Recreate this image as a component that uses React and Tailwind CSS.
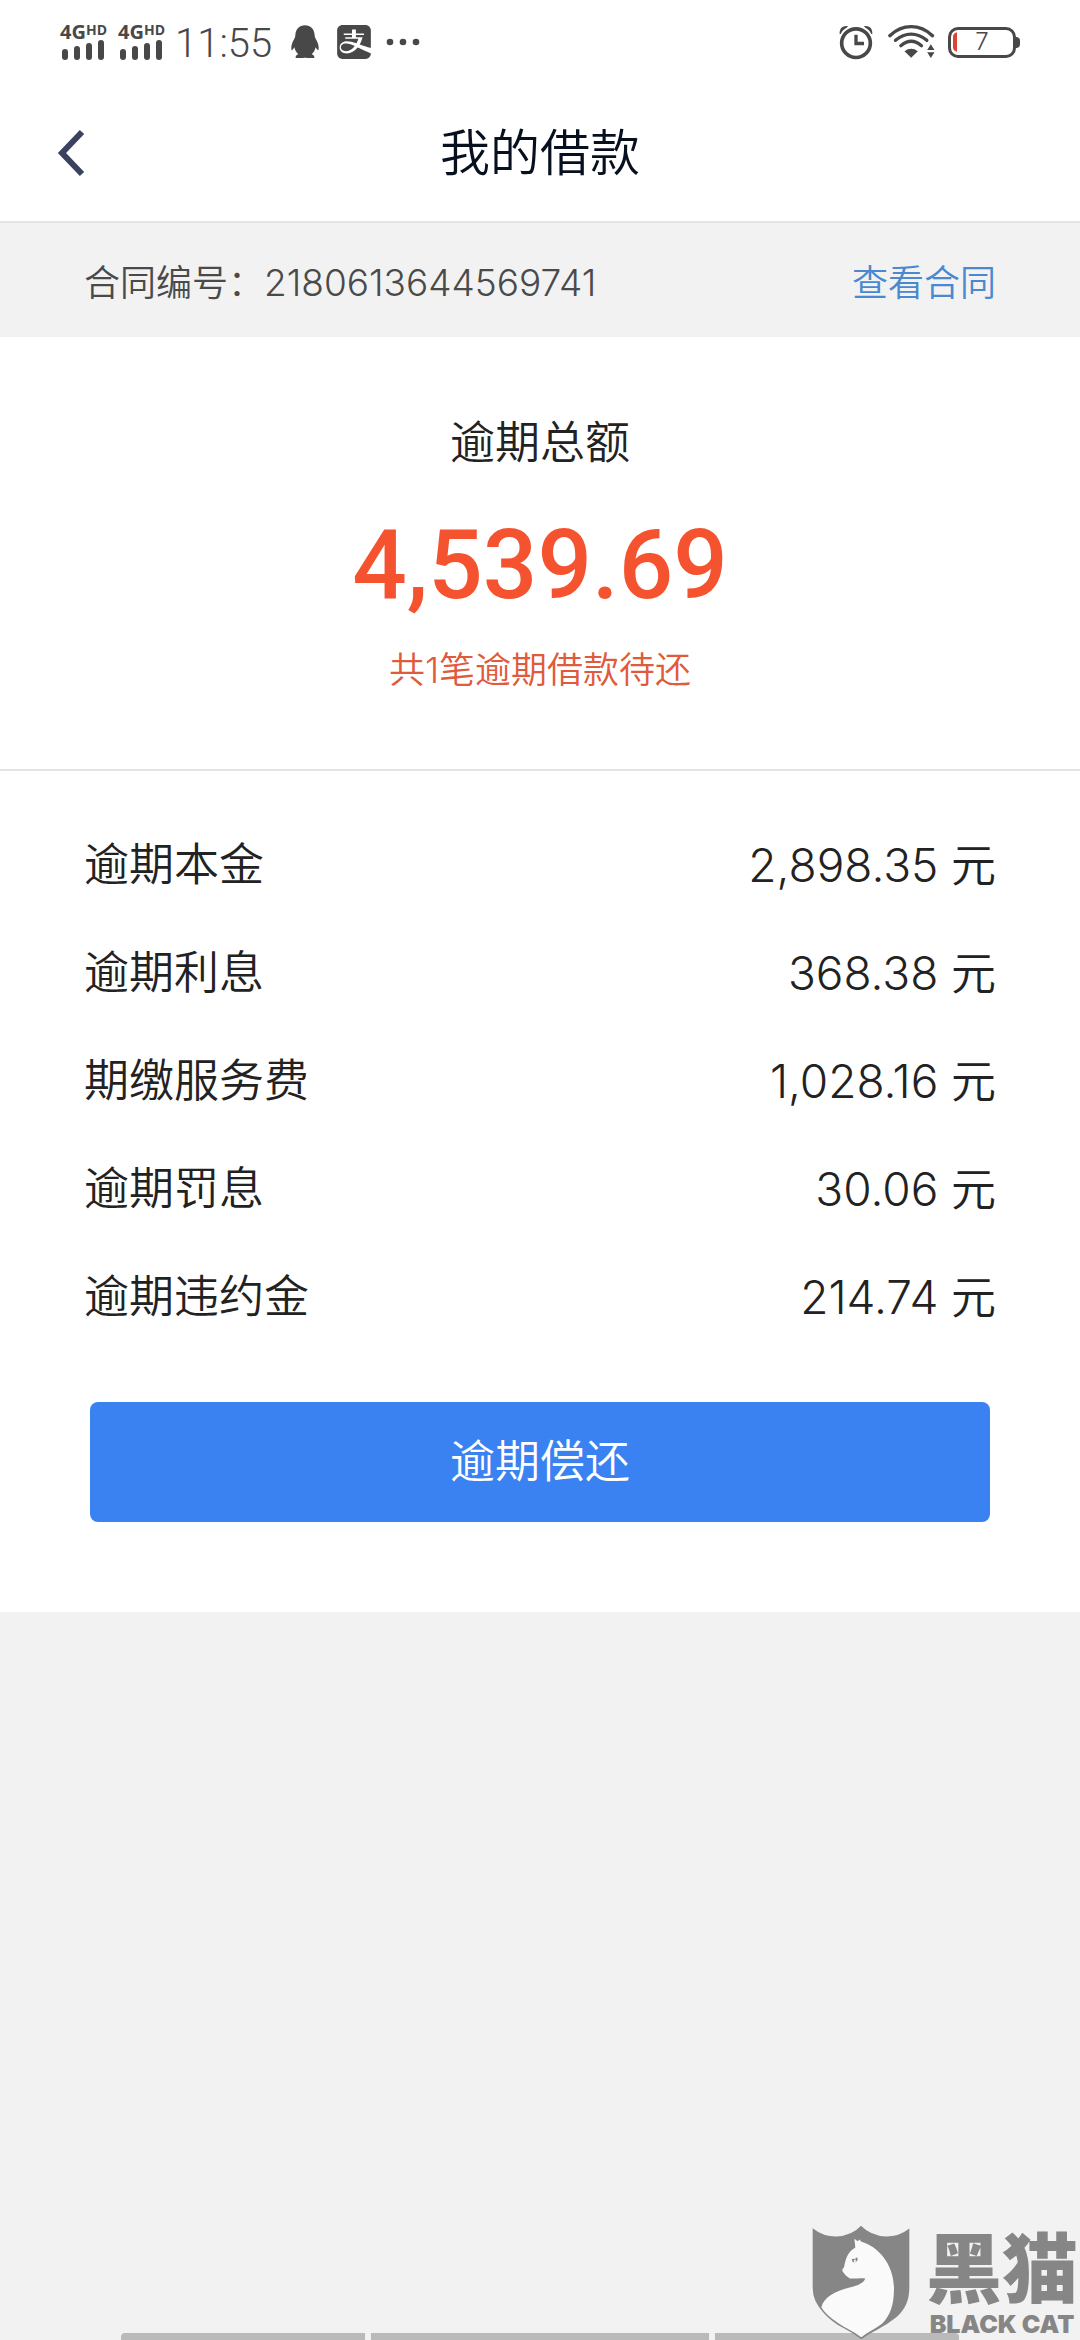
import React from "react";
import { SiAlipay } from "react-icons/si";

const charges = [
  ["逾期本金", "2,898.35"],
  ["逾期利息", "368.38"],
  ["期缴服务费", "1,028.16"],
  ["逾期罚息", "30.06"],
  ["逾期违约金", "214.74"],
];

function Signal() {
  return (
    <div className="flex w-[48px] flex-col">
      <div className="flex items-start font-bold leading-none">
        <span className="font-['Open_Sans'] text-[20px] leading-[16px]">4G</span>
        <span className="font-['Open_Sans'] text-[14px] leading-[11px]">HD</span>
      </div>
      <svg viewBox="0 0 48 20" className="h-[20px] w-[48px]" fill="currentColor" aria-hidden="true">
        <rect x="2" y="9" width="6" height="11" rx="3" />
        <rect x="14" y="6" width="6" height="14" rx="3" />
        <rect x="26" y="3" width="6" height="17" rx="3" />
        <rect x="38" y="0" width="6" height="20" rx="3" />
      </svg>
    </div>
  );
}

function Penguin() {
  return (
    <svg viewBox="0 0 84 102" className="h-[34px] w-[28px]" fill="currentColor" aria-hidden="true">
      <path d="M42 1C25 1 14 13 13 30c0 5-1 7-3 11C5 50 0 60 1 72c0 6 4 4 9-5 2 9 6 16 12 21-6 2-9 6-8 11h22c3-1 9-1 12 0h22c1-5-2-9-8-11 6-5 10-12 12-21 5 9 9 11 9 5 1-12-4-22-9-31-2-4-3-6-3-11C70 13 59 1 42 1Z" />
    </svg>
  );
}

function Alarm() {
  return (
    <svg viewBox="0 0 102 104" className="h-[35px] w-[34px]" fill="none" stroke="currentColor" aria-hidden="true">
      <circle cx="51" cy="54" r="43" strokeWidth="11" />
      <path d="M51 29v26h24" strokeWidth="10" />
      <path d="M2 27C1 10 10 1 27 3L23 8C14 13 8 18 6 26ZM100 27C101 10 92 1 75 3l4 5c9 5 15 10 17 18Z" fill="currentColor" stroke="none" />
    </svg>
  );
}

function Wifi() {
  return (
    <svg viewBox="0 0 140 102" className="h-[34px] w-[47px]" fill="none" stroke="currentColor" strokeLinecap="round" aria-hidden="true">
      <path d="M5 32C43-4 95-4 133 32" strokeWidth="10" />
      <path d="M22 46C51 21 87 21 116 46" strokeWidth="10" />
      <path d="M38 62C58 45 80 45 100 62" strokeWidth="10" />
      <path d="M49 79C62 69 76 69 89 79L69 98Z" fill="currentColor" stroke="none" />
      <path d="M117 75l11-17 11 17ZM117 82h22l-11 17Z" fill="currentColor" stroke="none" />
    </svg>
  );
}

function Battery() {
  return (
    <div className="flex items-center" role="img" aria-label="7">
      <div className="flex h-[31px] w-[68px] items-center rounded-[10px] border-3 border-[#484848] pl-[2px]">
        <svg viewBox="0 0 12 58" className="h-[20px] w-[4px]" aria-hidden="true">
          <path d="M12 0C3 2 0 7 0 14v30c0 7 3 12 12 14Z" fill="#dd4331" />
        </svg>
        <span className="flex-1 pr-[6px] text-center text-[24px] leading-none">7</span>
      </div>
      <span className="h-[11px] w-[4px] rounded-r-[4px] bg-[#484848]" />
    </div>
  );
}

function StatusBar() {
  return (
    <div className="flex h-[84px] items-center justify-between bg-white pl-[60px] pr-[60px] text-[#484848]">
      <div className="flex items-center">
        <Signal />
        <div className="ml-[10px]">
          <Signal />
        </div>
        <span className="ml-[9px] w-[104px] whitespace-nowrap pt-[4px] font-['Roboto'] text-[40px] leading-none">11:55</span>
        <div className="ml-[12px]">
          <Penguin />
        </div>
        <SiAlipay className="ml-[18px] size-[34px]" aria-hidden="true" />
        <svg viewBox="0 0 34 8" className="ml-[15px] h-[8px] w-[34px]" fill="currentColor" aria-hidden="true">
          <circle cx="4" cy="4" r="3.3" />
          <circle cx="17" cy="4" r="3.3" />
          <circle cx="30" cy="4" r="3.3" />
        </svg>
      </div>
      <div className="flex items-center">
        <Alarm />
        <div className="ml-[15px] mr-[13px]">
          <Wifi />
        </div>
        <Battery />
      </div>
    </div>
  );
}

function Watermark() {
  return (
    <div className="absolute bottom-0 right-0 flex items-end gap-[16px] pr-[2px] text-[#878686]">
      <svg viewBox="92 74 294 344" className="h-[115px] w-[98px]" aria-hidden="true">
        <path d="M94 83Q125 108 165 108Q212 106 239 76Q268 106 314 108Q354 108 384 84V262Q384 318 344 351Q320 370 290 386Q262 400 240 416Q216 398 185 382Q150 363 128 338Q94 304 94 262Z" fill="currentColor" />
        <path d="M219 115L229 122L235 117L239 123C292 139 336 190 338 262C338 312 328 344 302 370C280 386 258 396 240 410C215 392 190 382 168 366C145 350 130 336 120 320C128 290 160 272 205 261C232 255 247 247 252 234C234 232 222 235 206 234C196 228 190 222 184 213C181 208 184 204 188 201C194 170 200 154 222 141Z" fill="#fafafa" />
        <path d="M211 177q6-5 12 1l-6 1 2 7q-7-1-8-9ZM222 173q8-5 7 4-2 8-7 7 3-5 0-11Z" fill="currentColor" />
      </svg>
      <div className="flex flex-col items-center gap-[6px]">
        <span className="font-['Noto_Sans_CJK_SC'] text-[76px] font-black leading-[76px]">黑猫</span>
        <span className="text-[25px] font-black leading-[32px]">BLACK CAT</span>
      </div>
    </div>
  );
}

export default function App() {
  return (
    <div className="relative flex min-h-screen flex-col bg-[#f2f2f2] font-['Inter','Noto_Sans_CJK_SC_DemiLight','Noto_Sans_CJK_SC',sans-serif] font-light text-[#222222]">
      <StatusBar />
      <header className="grid h-[139px] grid-cols-[1fr_auto_1fr] items-center border-b-2 border-[#e4e4e4] bg-white px-[54px]">
        <button type="button" aria-label="返回" className="justify-self-start">
          <svg viewBox="0 0 32 48" className="h-[48px] w-[32px]" fill="none" stroke="#3a4260" strokeWidth="6" aria-hidden="true">
            <path d="M28 3L8 24l20 21" />
          </svg>
        </button>
        <h1 className="text-[50px] leading-none text-[#06101f]">我的借款</h1>
      </header>
      <section className="flex h-[114px] items-center justify-between px-[84px] pt-[6px] text-[36px] text-[#4a4a4a]">
        <p>
          合同编号：<span className="text-[37px]">2180613644569741</span>
        </p>
        <a href="#contract" className="text-[#4a88d0]">查看合同</a>
      </section>
      <main className="bg-white">
        <section className="flex flex-col items-center border-b-2 border-[#e4e4e4] pb-[74px] pt-[76px]">
          <h2 className="text-[45px] leading-[60px]">逾期总额</h2>
          <p className="mt-[44px] font-['Roboto'] text-[96px] font-medium leading-[96px] text-[#f5532f]">4,539.69</p>
          <p className="mt-[32px] text-[36px] leading-[50px] text-[#e05a3c]">共1笔逾期借款待还</p>
        </section>
        <dl className="px-[84px] pt-[40px] text-[45px]">
          {charges.map(([label, amount]) => (
            <div key={label} className="flex h-[108px] items-center justify-between">
              <dt>{label}</dt>
              <dd>
                <span className="text-[46px]">{amount}</span> 元
              </dd>
            </div>
          ))}
        </dl>
        <div className="px-[90px] pb-[90px] pt-[51px]">
          <button type="button" className="h-[120px] w-full rounded-lg bg-[#3a82f2] text-[45px] text-white">逾期偿还</button>
        </div>
      </main>
      <div className="mt-auto flex h-[7px] gap-[6px] px-[121px]">
        <span className="flex-[244] rounded-tl-[4px] bg-[#bababa]" />
        <span className="flex-[338] bg-[#bababa]" />
        <span className="flex-[244] rounded-tr-[4px] bg-[#bababa]" />
      </div>
      <Watermark />
    </div>
  );
}
